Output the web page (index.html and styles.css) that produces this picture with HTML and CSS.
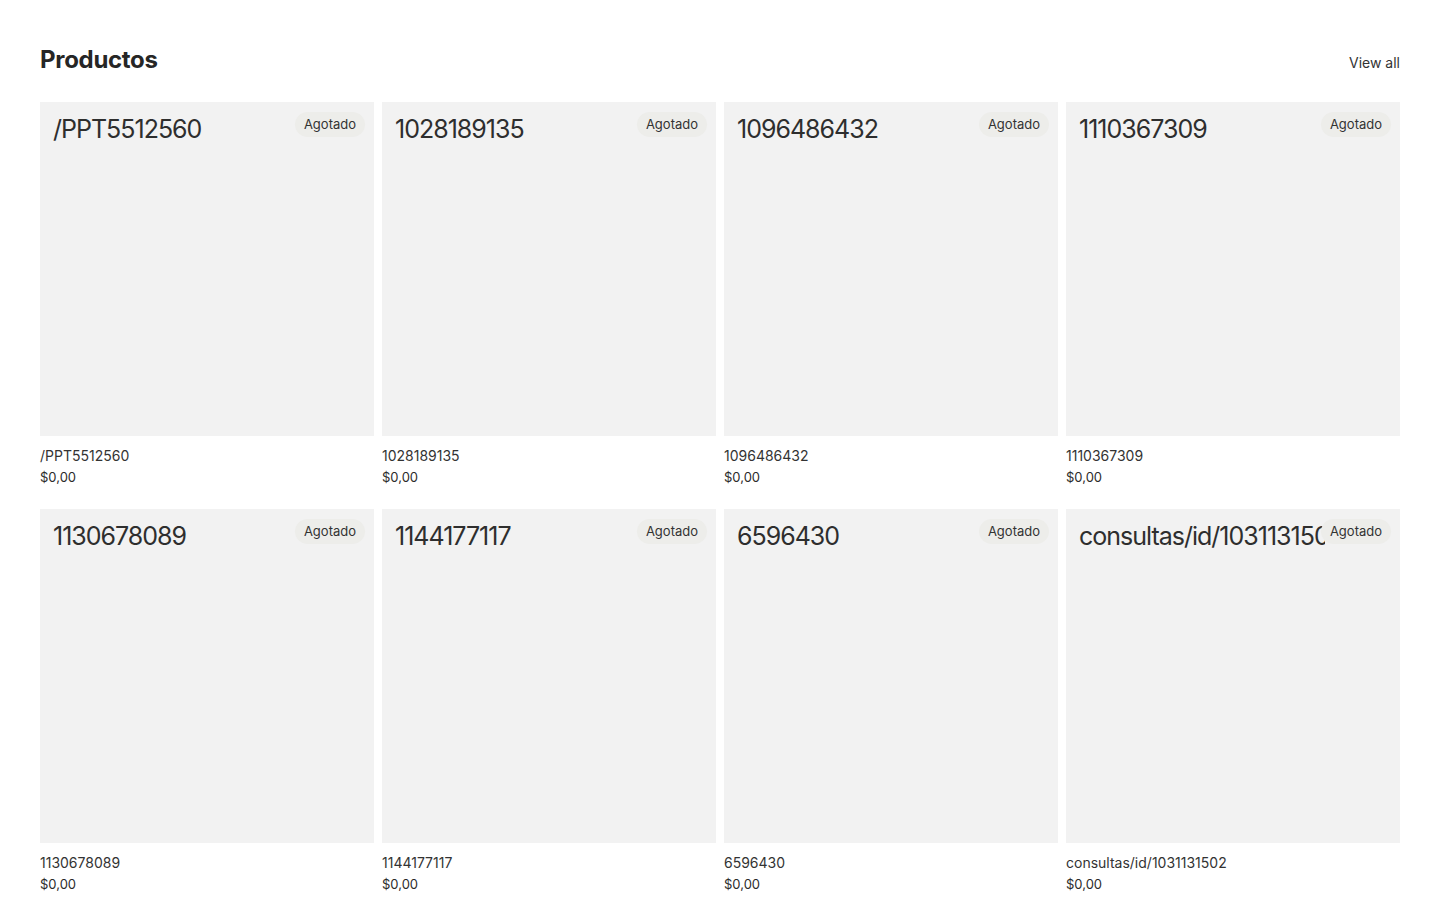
FILE: index.html
```html
<!DOCTYPE html>
<html lang="es">
<head>
    <meta charset="UTF-8">
    <meta name="viewport" content="width=device-width, initial-scale=1.0">
    <title>Productos</title>
    <link rel="stylesheet" href="styles.css">
</head>
<body>
    <section class="collection">
        <div class="collection-header">
            <h2>Productos</h2>
            <a href="#" class="view-all">View all</a>
        </div>

        <div class="product-grid">
            <div class="product-card">
                <div class="product-media">
                    <span class="placeholder">/PPT5512560</span>
                    <span class="badge">Agotado</span>
                </div>
                <div class="product-title">/PPT5512560</div>
                <div class="product-price">$0,00</div>
            </div>
            <div class="product-card">
                <div class="product-media">
                    <span class="placeholder">1028189135</span>
                    <span class="badge">Agotado</span>
                </div>
                <div class="product-title">1028189135</div>
                <div class="product-price">$0,00</div>
            </div>
            <div class="product-card">
                <div class="product-media">
                    <span class="placeholder">1096486432</span>
                    <span class="badge">Agotado</span>
                </div>
                <div class="product-title">1096486432</div>
                <div class="product-price">$0,00</div>
            </div>
            <div class="product-card">
                <div class="product-media">
                    <span class="placeholder">1110367309</span>
                    <span class="badge">Agotado</span>
                </div>
                <div class="product-title">1110367309</div>
                <div class="product-price">$0,00</div>
            </div>
            <div class="product-card">
                <div class="product-media">
                    <span class="placeholder">1130678089</span>
                    <span class="badge">Agotado</span>
                </div>
                <div class="product-title">1130678089</div>
                <div class="product-price">$0,00</div>
            </div>
            <div class="product-card">
                <div class="product-media">
                    <span class="placeholder">1144177117</span>
                    <span class="badge">Agotado</span>
                </div>
                <div class="product-title">1144177117</div>
                <div class="product-price">$0,00</div>
            </div>
            <div class="product-card">
                <div class="product-media">
                    <span class="placeholder">6596430</span>
                    <span class="badge">Agotado</span>
                </div>
                <div class="product-title">6596430</div>
                <div class="product-price">$0,00</div>
            </div>
            <div class="product-card">
                <div class="product-media">
                    <span class="placeholder">consultas/id/1031131502</span>
                    <span class="badge">Agotado</span>
                </div>
                <div class="product-title">consultas/id/1031131502</div>
                <div class="product-price">$0,00</div>
            </div>
        </div>
    </section>
</body>
</html>
```

FILE: styles.css
```css
body {
    margin: 0;
    font-family: Inter, "Noto Sans", sans-serif;
    color: #2b2b2b;
    background: #fff;
}
.collection {
    padding: 44px 40px 0;
}
.collection-header {
    display: flex;
    justify-content: space-between;
    align-items: baseline;
    margin-bottom: 26px;
}
.collection-header h2 {
    margin: 0;
    font-size: 24px;
    line-height: 32px;
    font-weight: 700;
    letter-spacing: -0.3px;
    color: #262626;
}
.view-all {
    font-size: 14px;
    color: #333;
    text-decoration: none;
}
.product-grid {
    display: grid;
    grid-template-columns: repeat(4, minmax(0, 1fr));
    column-gap: 8px;
    row-gap: 22px;
}
.product-media {
    position: relative;
    height: 334px;
    background-color: #f2f2f2;
    overflow: hidden;
}
/* long names are cut off before the badge */
.placeholder {
    display: block;
    margin: 11px 75px 0 13px;
    font-size: 25px;
    line-height: 32px;
    letter-spacing: -1px;
    color: #2e2e2e;
    white-space: nowrap;
    overflow: hidden;
}
.badge {
    position: absolute;
    top: 10px;
    right: 9px;
    padding: 4px 9px;
    font-size: 13px;
    line-height: 17px;
    color: #333;
    background-color: #ededea;
    border-radius: 13px;
}
.product-title {
    margin-top: 10px;
    font-size: 14px;
    line-height: 20px;
    color: #333;
}
.product-price {
    margin-top: 1px;
    font-size: 13px;
    line-height: 20px;
    color: #2b2b2b;
}
```
